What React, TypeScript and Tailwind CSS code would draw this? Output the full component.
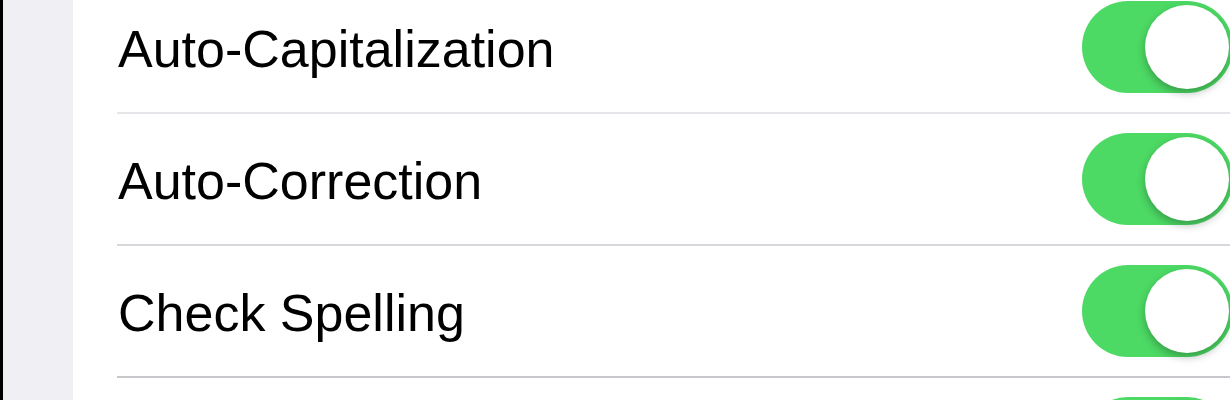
import React from "react";

type Row = {
  label: string;
  divider: string;
};

const rows: Row[] = [
  { label: "Auto-Capitalization", divider: "bg-[#e6e6ea]" },
  { label: "Auto-Correction", divider: "bg-[#d8d8dc]" },
  { label: "Check Spelling", divider: "bg-[#c8c7cc]" },
  { label: "", divider: "bg-[#c8c7cc]" },
];

const Toggle = () => {
  return (
    <div className="ml-auto -mr-[3px] h-[92px] w-[151px] shrink-0 rounded-full bg-[#4cd964] p-[4px] flex justify-end items-center">
      <div className="h-[84px] w-[84px] rounded-full bg-white shadow-[0_4px_8px_rgba(0,0,0,0.28)]" />
    </div>
  );
};

const App = () => {
  return (
    <div
      className="w-[1230px] h-[400px] overflow-hidden flex bg-white"
      style={{ fontFamily: '"Liberation Sans", Arial, sans-serif' }}
    >
      <div className="w-[3px] shrink-0 bg-black" />
      <div className="w-[70px] shrink-0 bg-[#efeff4]" />
      <div className="flex-1 flex flex-col -mt-[18px]">
        {rows.map((row, i) => (
          <div key={i} className="flex flex-col shrink-0">
            <div className="h-[130px] flex items-center pl-[45px]">
              <span className="pt-[4px] text-[52px] leading-none text-black">
                {row.label}
              </span>
              <Toggle />
            </div>
            <div className={`ml-[44px] h-[2px] ${row.divider}`} />
          </div>
        ))}
      </div>
    </div>
  );
};

export default App;
